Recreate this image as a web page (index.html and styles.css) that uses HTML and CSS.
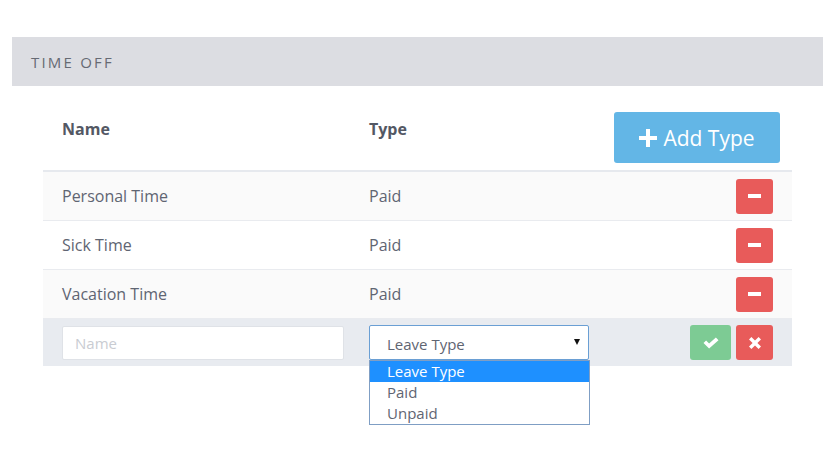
FILE: index.html
```html
<!DOCTYPE html>
<html>
<head>
<meta charset="utf-8">
<link rel="stylesheet" href="styles.css">
</head>
<body>
<div class="page">
  <div class="panel-head">TIME OFF</div>
  <div class="table">
    <div class="row head">
      <div class="c-name">Name</div>
      <div class="c-type">Type</div>
      <div class="c-act">
        <button class="btn-add"><svg width="18" height="18" viewBox="0 0 18 18"><path d="M7 0h4v7h7v4h-7v7H7v-7H0V7h7z" fill="#fff"/></svg><span>Add Type</span></button>
      </div>
    </div>
    <div class="row odd">
      <div class="c-name">Personal Time</div>
      <div class="c-type">Paid</div>
      <div class="c-act"><button class="btn-sq red"><span class="minus"></span></button></div>
    </div>
    <div class="row">
      <div class="c-name">Sick Time</div>
      <div class="c-type">Paid</div>
      <div class="c-act"><button class="btn-sq red"><span class="minus"></span></button></div>
    </div>
    <div class="row odd">
      <div class="c-name">Vacation Time</div>
      <div class="c-type">Paid</div>
      <div class="c-act"><button class="btn-sq red"><span class="minus"></span></button></div>
    </div>
    <div class="row edit">
      <div class="c-name"><div class="input">Name</div></div>
      <div class="c-type">
        <div class="select-wrap">
          <div class="select"><span>Leave Type</span><span class="arrow"></span></div>
          <div class="listbox">
            <div class="opt sel">Leave Type</div>
            <div class="opt">Paid</div>
            <div class="opt">Unpaid</div>
          </div>
        </div>
      </div>
      <div class="c-act">
        <button class="btn-sq green wide"><svg width="16" height="12" viewBox="0 0 16 12"><path d="M0.5 6l2.6-2.6 3 3L12.9 0.6 15.5 3.2 6.1 11.6z" fill="#fff"/></svg></button>
        <button class="btn-sq red"><svg width="12" height="12" viewBox="0 0 12 12"><path d="M2.4 0L6 3.6 9.6 0 12 2.4 8.4 6 12 9.6 9.6 12 6 8.4 2.4 12 0 9.6 3.6 6 0 2.4z" fill="#fff"/></svg></button>
      </div>
    </div>
  </div>
</div>
</body>
</html>
```
FILE: styles.css
```css
* { box-sizing: border-box; }
html, body { margin: 0; padding: 0; background: #fff; }
body { font-family: "Open Sans", "Liberation Sans", sans-serif; color: #5f6572; min-height: 472px; }
.page { padding: 37px 13px 0 12px; min-height: 472px; }
.panel-head {
  height: 49px;
  background: #dcdde2;
  padding-left: 19px;
  display: flex;
  align-items: center;
  font-size: 15px;
  letter-spacing: 2.2px;
  color: #666a73;
  padding-top: 1px;
}
.table { margin: 0 31px; }
.row {
  display: flex;
  align-items: center;
  height: 49px;
  border-bottom: 1px solid #e9ebef;
  font-size: 16px;
}
.row.odd { background: #fafafa; }
.row .c-name, .row .c-type { padding-bottom: 1px; }
.row.head {
  height: 86px;
  border-bottom: 2px solid #e6e9ee;
  font-weight: bold;
  color: #535864;
  align-items: stretch;
}
.row.head .c-name, .row.head .c-type { padding-top: 32px; }
.row.head .c-act { padding-top: 26px; padding-right: 12px; }
.c-name { width: 326px; padding-left: 19px; }
.c-type { width: 220px; }
.c-act { flex: 1; display: flex; justify-content: flex-end; padding-right: 19px; gap: 5px; }
.row.edit { background: #e8ebf0; height: 47px; border-bottom: none; }
.row.edit .c-name, .row.edit .c-type { padding-bottom: 0; }
button { font-family: inherit; border: none; cursor: pointer; padding: 0; }
.btn-add {
  width: 166px;
  height: 51px;
  background: #63b6e6;
  border-radius: 3px;
  color: #fff;
  font-size: 21px;
  font-weight: normal;
  display: flex;
  align-items: center;
  justify-content: center;
  gap: 6px;
}
.btn-add svg { margin-top: 1px; }
.btn-sq {
  width: 37px;
  height: 35px;
  border-radius: 3px;
  display: flex;
  align-items: center;
  justify-content: center;
}
.btn-sq.wide { width: 41px; }
.red { background: #e85b5a; }
.green { background: #7dcb94; }
.minus { display: block; width: 13px; height: 4px; background: #fff; }
.input {
  width: 282px;
  height: 34px;
  background: #fff;
  border: 1px solid #dfe2e7;
  border-radius: 2px;
  padding-left: 12px;
  line-height: 32px;
  font-size: 15px;
  color: #c9ccd2;
}
.select-wrap { position: relative; width: 221px; }
.select {
  width: 220px;
  height: 35px;
  background: #fff;
  border: 1px solid #6a9fd4;
  border-radius: 2px;
  display: flex;
  align-items: center;
  justify-content: space-between;
  padding: 2px 8px 0 17px;
  font-size: 15px;
  color: #5f6572;
}
.arrow {
  width: 0; height: 0;
  border-left: 3.5px solid transparent;
  border-right: 3.5px solid transparent;
  border-top: 6px solid #111;
  margin-top: -3px;
}
.listbox {
  position: absolute;
  left: 0;
  top: 35px;
  width: 221px;
  background: #fff;
  border: 1px solid #7f9ec4;
  z-index: 5;
}
.opt {
  height: 21px;
  line-height: 21px;
  padding-left: 17px;
  font-size: 15px;
  color: #5f6572;
}
.opt.sel { background: #1e90ff; color: #fff; }
```
